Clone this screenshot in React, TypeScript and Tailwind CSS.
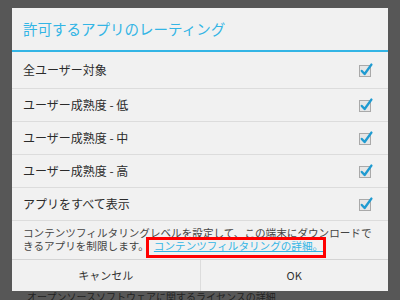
import React from 'react';

const rows = ['全ユーザー対象', 'ユーザー成熟度 - 低', 'ユーザー成熟度 - 中', 'ユーザー成熟度 - 高', 'アプリをすべて表示'];

const CheckBox = () => (
    <svg width="16" height="16" viewBox="0 0 16 16" className="block">
        <rect x="1.5" y="3.5" width="11" height="11" fill="#e6e6e6" stroke="#a9a9a9" strokeWidth="1" />
        <path d="M3.8 9 L6.6 12 L13.4 2.6" fill="none" stroke="#1f9bd1" strokeWidth="2.4" strokeLinecap="round" strokeLinejoin="round" />
    </svg>
);

export default function App() {
    return (
        <div
            className="w-[400px] h-[300px] overflow-hidden bg-[#575757] flex flex-col pt-[8px]"
            style={{ fontFamily: '"Noto Sans CJK JP", "Noto Sans", sans-serif' }}
        >
            {/* dialog */}
            <div className="mx-[12px] h-[283px] bg-[#f1f1f1] flex flex-col shrink-0">
                <div className="h-[42px] flex items-center pl-[11px] text-[14.5px] text-[#33b5e5] leading-none pt-[1px]">
                    許可するアプリのレーティング
                </div>
                <div className="h-[2px] bg-[#33b5e5]" />
                {rows.map((r, i) => (
                    <div
                        key={r}
                        className={`flex items-center justify-between pl-[11px] pr-[14px] border-b border-[#dcdcdc] text-[12px] text-[#2b2b2b] ${i === 0 ? 'h-[37px]' : 'h-[33px]'}`}
                    >
                        <span className="leading-none">{r}</span>
                        <CheckBox />
                    </div>
                ))}
                <div className="h-[39px] border-b border-[#d4d4d4] pl-[11px] pr-[8px] pt-[5px] text-[10.6px] leading-[13px] text-[#444] whitespace-nowrap">
                    コンテンツフィルタリングレベルを設定して、この端末にダウンロードで
                    <br />
                    きるアプリを制限します。
                    <span className="relative ml-[5px]">
                        <span className="absolute left-[-8px] right-[-3px] top-[-1px] bottom-[-5px] border-[3px] border-[#ff0000]" />
                        <span className="text-[#33b5e5] underline">コンテンツフィルタリングの詳細。</span>
                    </span>
                </div>
                <div className="flex-1 flex text-[11px] text-[#333]">
                    <div className="flex-1 flex items-center justify-center border-r border-[#dcdcdc]">キャンセル</div>
                    <div className="flex-1 flex items-center justify-center">OK</div>
                </div>
            </div>
            <div className="pl-[27px] text-[10px] leading-[12px] text-[#222] whitespace-nowrap">
                オープンソースソフトウェアに関するライセンスの詳細
            </div>
        </div>
    );
}
